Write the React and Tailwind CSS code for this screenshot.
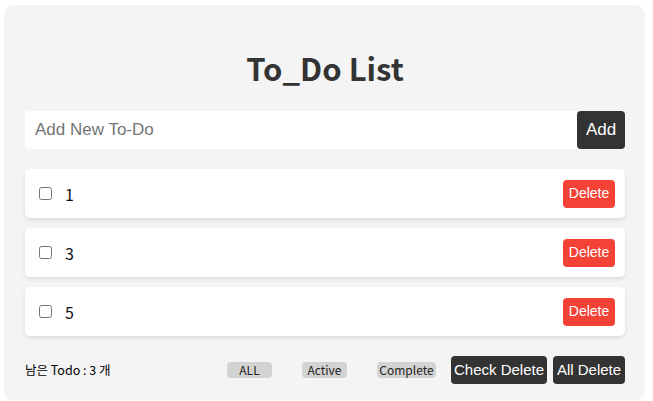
import React, { useState } from "react";

const initialTodos = [
  { id: 1, text: "1", done: false },
  { id: 3, text: "3", done: false },
  { id: 5, text: "5", done: false },
];

const App = () => {
  const [todos, setTodos] = useState(initialTodos);
  const [text, setText] = useState("");

  const toggle = (id) =>
    setTodos(todos.map((t) => (t.id === id ? { ...t, done: !t.done } : t)));

  const remove = (id) => setTodos(todos.filter((t) => t.id !== id));

  const add = () => {
    if (!text.trim()) return;
    setTodos([...todos, { id: Date.now(), text, done: false }]);
    setText("");
  };

  const left = todos.filter((t) => !t.done).length;

  return (
    <div className="w-[653px] h-[401px] bg-white pl-[4px] pt-[5px] overflow-hidden font-['Liberation_Sans',Arial,sans-serif]">
      <div className="w-[641px] h-[395px] bg-[#f4f4f4] rounded-[9px] pl-[21px] pr-[20px] pt-[37px]">
        {/* Title */}
        <h1 className="h-[50px] flex items-center justify-center text-[31px] font-bold text-[#333333] leading-none font-['Noto_Sans_CJK_KR','Noto_Sans',sans-serif]">
          To_Do List
        </h1>

        {/* New todo input */}
        <div className="mt-[19px] flex h-[38px]">
          <input
            type="text"
            placeholder="Add New To-Do"
            value={text}
            onChange={(e) => setText(e.target.value)}
            className="flex-1 min-w-0 h-full bg-white rounded-l-[4px] pl-[10px] text-[17px] text-[#333] placeholder-[#757575] outline-none"
          />
          <button
            onClick={add}
            className="w-[48px] h-full bg-[#333333] text-white text-[17px] rounded-[4px]"
          >
            Add
          </button>
        </div>

        {/* Todo items */}
        <ul className="mt-[20px] flex flex-col gap-[10px]">
          {todos.map((t) => (
            <li
              key={t.id}
              className="h-[49px] bg-white rounded-[5px] shadow-[0_2px_4px_rgba(0,0,0,0.1)] flex items-center pl-[14px] pr-[10px]"
            >
              <input
                type="checkbox"
                checked={t.done}
                onChange={() => toggle(t.id)}
                className="w-[13px] h-[13px] m-0"
              />
              <span className="ml-[13px] text-[16px] text-[#111] font-['Noto_Sans_CJK_KR',sans-serif]">
                {t.text}
              </span>
              <button
                onClick={() => remove(t.id)}
                className="ml-auto w-[52px] h-[28px] bg-[#f44336] text-white text-[14px] rounded-[4px]"
              >
                Delete
              </button>
            </li>
          ))}
        </ul>

        {/* Footer */}
        <div className="mt-[20px] h-[28px] flex items-center">
          <span className="text-[12.5px] text-black font-['Noto_Sans_CJK_KR',sans-serif]">
            남은 Todo : {left} 개
          </span>
          <div className="ml-auto flex items-center font-['Noto_Sans_CJK_KR',sans-serif]">
            <button className="w-[45px] h-[16px] bg-[#d3d3d3] rounded-[4px] text-[12px] text-[#222] leading-none">
              ALL
            </button>
            <button className="ml-[30px] w-[45px] h-[16px] bg-[#d3d3d3] rounded-[4px] text-[12px] text-[#222] leading-none">
              Active
            </button>
            <button className="ml-[30px] w-[59px] h-[16px] bg-[#d3d3d3] rounded-[4px] text-[12px] text-[#222] leading-none">
              Complete
            </button>
            <button className="ml-[15px] w-[96px] h-[28px] bg-[#333333] text-white text-[15px] rounded-[4px] font-['Liberation_Sans',Arial,sans-serif]">
              Check Delete
            </button>
            <button className="ml-[6px] w-[72px] h-[28px] bg-[#333333] text-white text-[15px] rounded-[4px] font-['Liberation_Sans',Arial,sans-serif]">
              All Delete
            </button>
          </div>
        </div>
      </div>
    </div>
  );
};

export default App;
